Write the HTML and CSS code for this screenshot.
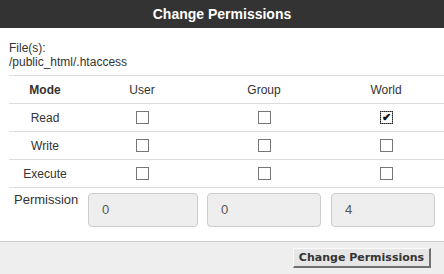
FILE: index.html
```html
<!DOCTYPE html>
<html lang="en">
<head>
  <meta charset="UTF-8" />
  <title>Change Permissions</title>
  <link rel="stylesheet" href="styles.css">
</head>
<body>

<div class="dialog">
  <div class="title">Change Permissions</div>

  <div class="content">
    <div class="files">
      <div>File(s):</div>
      <div>/public_html/.htaccess</div>
    </div>

    <div class="perm-table">
      <div class="cell head">Mode</div>
      <div class="cell">User</div>
      <div class="cell">Group</div>
      <div class="cell">World</div>

      <div class="cell">Read</div>
      <div class="cell"><span class="box"></span></div>
      <div class="cell"><span class="box"></span></div>
      <div class="cell"><span class="box checked focus">&#10004;</span></div>

      <div class="cell">Write</div>
      <div class="cell"><span class="box"></span></div>
      <div class="cell"><span class="box"></span></div>
      <div class="cell"><span class="box"></span></div>

      <div class="cell">Execute</div>
      <div class="cell"><span class="box"></span></div>
      <div class="cell"><span class="box"></span></div>
      <div class="cell"><span class="box"></span></div>
    </div>

    <div class="perm-row">
      <div class="perm-label">Permission</div>
      <div class="num w1">0</div>
      <div class="num w2">0</div>
      <div class="num w3">4</div>
    </div>
  </div>

  <div class="footer">
    <button class="btn">Change Permissions</button>
  </div>
</div>

</body>
</html>
```

FILE: styles.css
```css
html, body {
  margin: 0;
  overflow: hidden;
}

body {
  font-family: 'Liberation Sans', Arial, sans-serif;
  color: #333;
  background: #fff;
}

.title {
  height: 28px;
  line-height: 28px;
  background: #333;
  color: #fff;
  text-align: center;
  font-size: 14px;
  font-weight: bold;
}

.content {
  padding-left: 9px;
}

.files {
  margin-top: 13px;
  padding-bottom: 6px;
  font-size: 12px;
  line-height: 14px;
  border-bottom: 1px solid #ddd;
}

.perm-table {
  display: grid;
  grid-template-columns: 72px 122px 122px 119px;
  grid-auto-rows: 28px;
}

.cell {
  display: flex;
  align-items: center;
  justify-content: center;
  font-size: 12px;
  border-bottom: 1px solid #ddd;
}

.perm-table .cell:nth-child(4n) {
  padding-left: 3px;
}

.head {
  font-weight: bold;
}

.box {
  width: 11px;
  height: 11px;
  border: 1px solid #767676;
  background: #fff;
  font-size: 11px;
  line-height: 11px;
  text-align: center;
  color: #111;
  font-weight: bold;
}

.box.focus {
  outline: 1px dotted #222;
  outline-offset: -1px;
}

.perm-row {
  display: flex;
  align-items: flex-start;
  padding-top: 5px;
  padding-bottom: 14px;
}

.perm-label {
  width: 79px;
  font-size: 13px;
  line-height: 15px;
  padding-left: 5px;
  box-sizing: border-box;
  margin-top: -1px;
}

.num {
  height: 32px;
  line-height: 32px;
  border: 1px solid #ccc;
  border-radius: 4px;
  background: #eee;
  color: #555;
  font-size: 13px;
  padding-left: 13px;
  margin-right: 9px;
}

.w1 { width: 95px; }
.w2 { width: 99px; }
.w3 { width: 89px; margin-left: 1px; margin-right: 0; }

.footer {
  border-top: 1px solid #ccc;
  background: #eee;
  height: 40px;
  display: flex;
  justify-content: flex-end;
  align-items: flex-start;
  padding-right: 13px;
}

.btn {
  margin-top: 6px;
  width: 138px;
  height: 20px;
  padding: 0;
  font-family: 'DejaVu Sans', Verdana, sans-serif;
  font-size: 11px;
  font-weight: bold;
  color: #333;
  background: #e6e6e6;
  border-color: #fafafa #707070 #707070 #fafafa;
  border-width: 1px 2px 2px 1px;
  border-style: solid;
}
```
